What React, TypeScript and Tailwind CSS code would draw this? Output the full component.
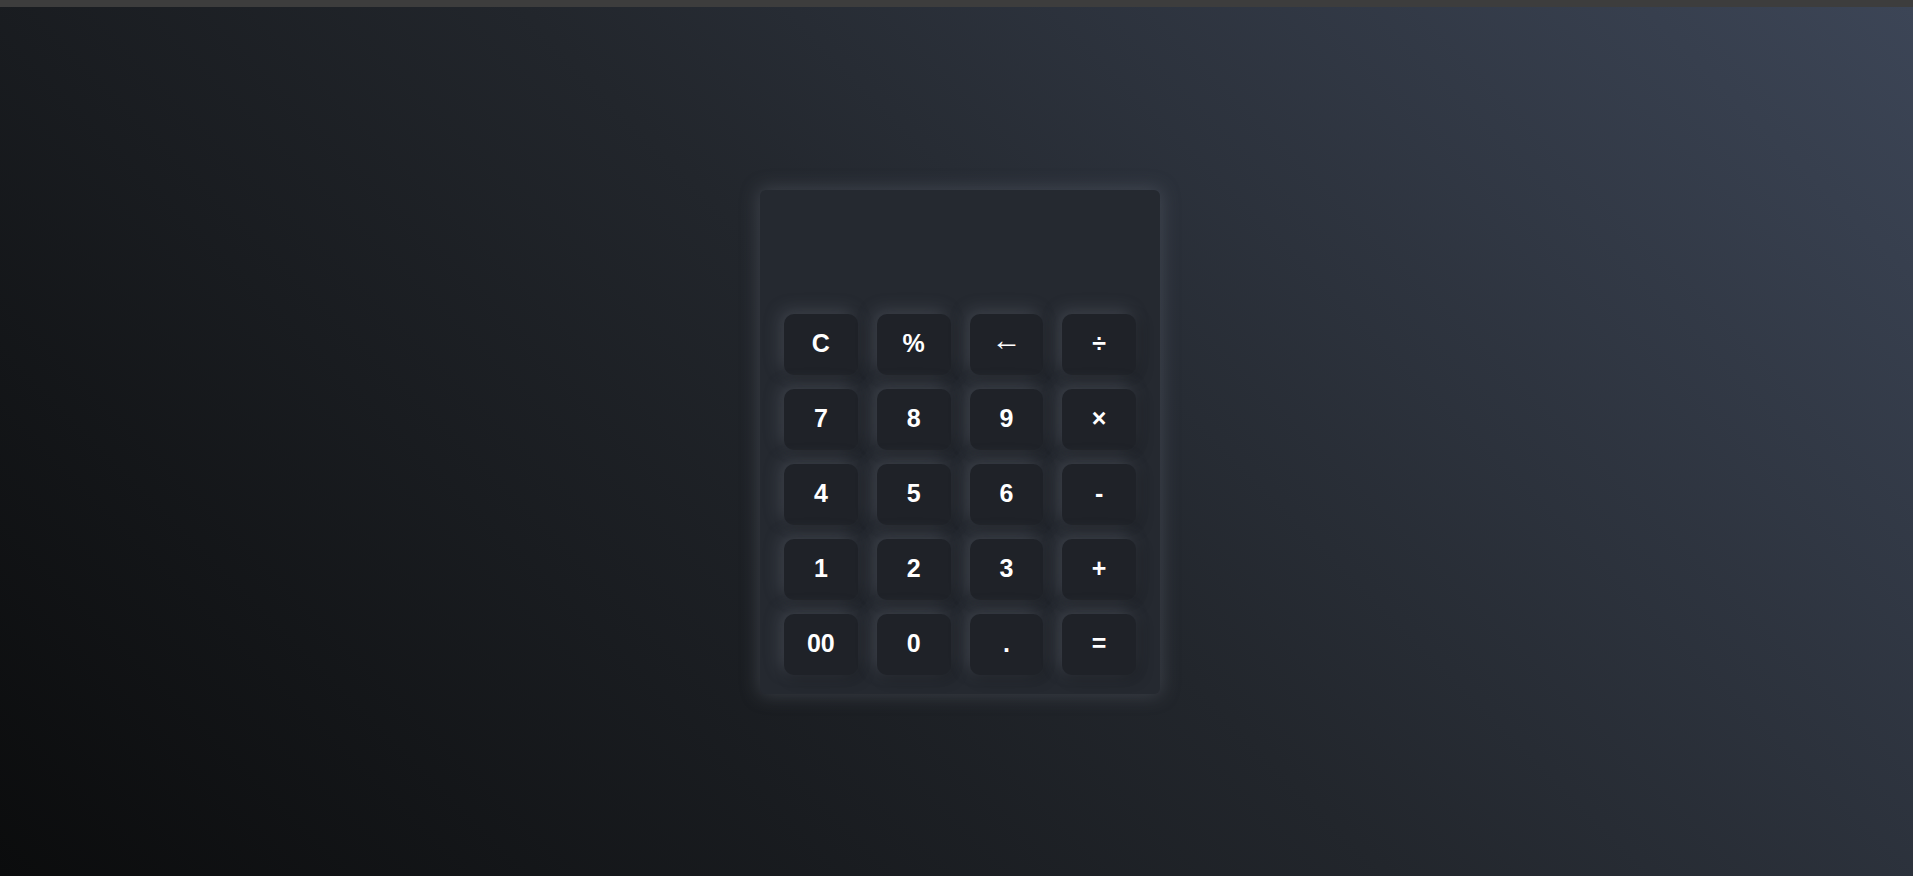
import React from "react";

const KEYS = [
  "C", "%", "←", "÷",
  "7", "8", "9", "×",
  "4", "5", "6", "-",
  "1", "2", "3", "+",
  "00", "0", ".", "=",
];

export default function App() {
  return (
    <div className="flex h-[876px] w-full flex-col overflow-hidden">
      {/* верхняя полоска браузера */}
      <div className="h-[7px] w-full bg-[#3d3d3d]" />
      <div className="flex flex-1 items-center justify-center bg-[linear-gradient(45deg,#0b0c0d_0%,#22262c_50%,#3c4556_100%)] pl-[7px]">
        <div className="w-[400px] rounded-[6px] bg-[#252930] px-[24px] pb-[19px] pt-[24px] shadow-[0_0_18px_2px_rgba(110,115,125,0.35)]">
          {/* дисплей */}
          <div className="h-[100px]" />
          <div className="grid grid-cols-4 gap-x-[19px] gap-y-[14px]">
            {KEYS.map((k) => (
              <button
                key={k}
                type="button"
                className="flex h-[61px] items-center justify-center rounded-[10px] bg-[#1f2228] text-[25px] font-bold text-white shadow-[-4px_-4px_16px_rgba(110,115,125,0.35),4px_4px_14px_rgba(0,0,0,0.25)]"
                style={{ fontFamily: "'Liberation Sans', Arial, sans-serif" }}
              >
                {k === "←" ? (
                  <span className="relative -top-[4px] text-[30px] font-normal leading-none">{k}</span>
                ) : (
                  k
                )}
              </button>
            ))}
          </div>
        </div>
      </div>
    </div>
  );
}
